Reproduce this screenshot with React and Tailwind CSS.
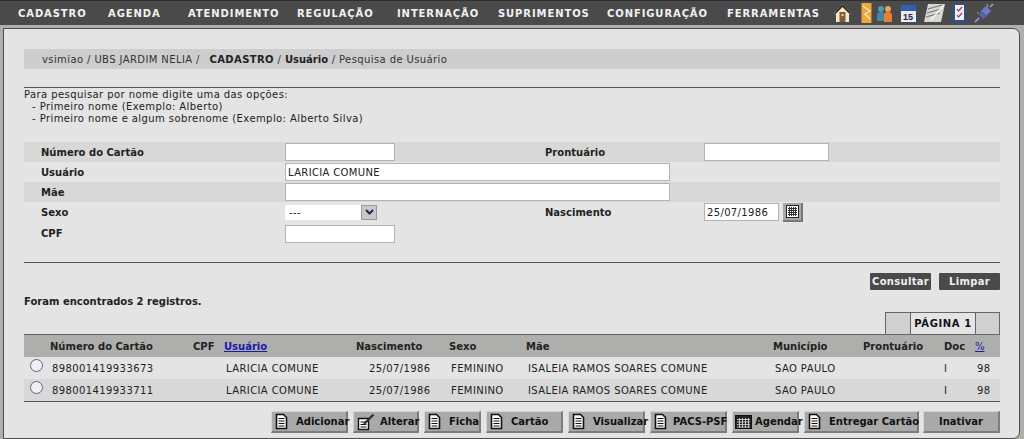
import React from 'react';

const menu = [
  ['CADASTRO', 'w-[90px]'],
  ['AGENDA', 'w-[80px]'],
  ['ATENDIMENTO', 'w-[109px]'],
  ['REGULAÇÃO', 'w-[100px]'],
  ['INTERNAÇÃO', 'w-[101px]'],
  ['SUPRIMENTOS', 'w-[109px]'],
  ['CONFIGURAÇÃO', 'w-[120px]'],
  ['FERRAMENTAS', 'w-[100px]'],
];

const tableCols = 'grid grid-cols-[26px_143px_31px_132px_93px_77px_247px_90px_81px_31px_1fr] items-center';

const DocIcon = () => (
  <svg width="13" height="17" viewBox="0 0 13 17" className="shrink-0">
    <path d="M1.5 1.5h7l3 3v11h-10z" fill="#fff" stroke="#111" strokeWidth="1.6" />
    <path d="M3.5 5.5h6M3.5 8h6M3.5 10.5h6M3.5 13h6" stroke="#111" strokeWidth="1" />
  </svg>
);

const EditIcon = () => (
  <svg width="19" height="18" viewBox="0 0 19 18" className="shrink-0">
    <path d="M1.5 5.5h10v11h-10z" fill="#fff" stroke="#111" strokeWidth="1.4" />
    <path d="M3.5 9h6M3.5 11.5h6M3.5 14h6" stroke="#111" strokeWidth="1" />
    <path d="M7 11L16.5 1.5" stroke="#333" strokeWidth="2.4" />
  </svg>
);

const GridIcon = () => (
  <svg width="17" height="14" viewBox="0 0 17 14" className="shrink-0">
    <rect x="0.5" y="0.5" width="16" height="13" fill="#222" stroke="#111" />
    <path d="M2 4.5h13M2 7h13M2 9.5h13M2 12h13" stroke="#ddd" strokeWidth="0.8" />
    <path d="M4.5 3v10M7.5 3v10M10.5 3v10M13.5 3v10" stroke="#ddd" strokeWidth="0.8" />
  </svg>
);

const actions = [
  { label: 'Adicionar', w: 'w-[77px]', icon: <DocIcon />, gap: 'gap-[8px]', pl: 'pl-[3px]' },
  { label: 'Alterar', w: 'w-[66px]', icon: <EditIcon />, gap: 'gap-[4px]', pl: 'pl-[3px]' },
  { label: 'Ficha', w: 'w-[57px]', icon: <DocIcon />, gap: 'gap-[8px]', pl: 'pl-[3px]' },
  { label: 'Cartão', w: 'w-[77px]', icon: <DocIcon />, gap: 'gap-[8px]', pl: 'pl-[3px]' },
  { label: 'Visualizar', w: 'w-[77px]', icon: <DocIcon />, gap: 'gap-[8px]', pl: 'pl-[3px]' },
  { label: 'PACS-PSF', w: 'w-[77px]', icon: <DocIcon />, gap: 'gap-[6px]', pl: 'pl-[3px]' },
  { label: 'Agendar', w: 'w-[67px]', icon: <GridIcon />, gap: 'gap-[3px]', pl: 'pl-[2px]' },
  { label: 'Entregar Cartão', w: 'w-[115px]', icon: <DocIcon />, gap: 'gap-[8px]', pl: 'pl-[3px]' },
];

const rows = [
  { cartao: '898001419933673', bg: 'bg-[#e4e4e4]' },
  { cartao: '898001419933711', bg: 'bg-[#d8d8d8]' },
];

const inputBox = 'h-[18px] bg-white border border-[#b4b4b4] px-[2px] text-[10px] text-[#222] tracking-[0.35px] flex items-center';

const ToolbarIcons = () => (
  <div className="flex items-center ml-[6px] gap-[6px]">
    {/* casa */}
    <svg width="19" height="20" viewBox="0 0 19 20">
      <path d="M9.500 1L1 10l2 1.500V19h13v-7.500l2-1.500z" fill="#efe8d2" />
      <path d="M9.500 1L1 10l1.500 1L9.500 4l7 7 1.500-1z" fill="#3b2a1a" />
      <rect x="6.500" y="9" width="6" height="10" fill="#8a5a2c" />
      <rect x="8.500" y="11" width="2" height="2" fill="#e8d8a8" />
    </svg>
    {/* porta */}
    <svg width="15" height="22" viewBox="0 0 15 22">
      <path d="M0 14h4" stroke="#3a4fb0" strokeWidth="1" />
      <rect x="3.500" y="1" width="10" height="20" fill="#f0a63c" />
      <path d="M5 4l7 5-5 3 5 5" stroke="#fff0c8" strokeWidth="1.200" fill="none" />
    </svg>
    {/* pessoas */}
    <svg width="18" height="20" viewBox="0 0 18 20" className="-ml-[3px]">
      <circle cx="5" cy="6" r="3" fill="#4f9bb8" />
      <path d="M1 18v-6q0-3 4-3t4 3v6z" fill="#3f86a8" />
      <circle cx="12" cy="6" r="3" fill="#f2a05a" />
      <path d="M8 19v-7q0-3 4-3t4 3v7z" fill="#ec7f2e" />
    </svg>
    {/* calendario */}
    <svg width="17" height="19" viewBox="0 0 17 19">
      <rect x="1" y="1" width="15" height="17" fill="#e8eef6" />
      <rect x="1" y="1" width="15" height="6" fill="#2f5fb0" />
      <text x="3" y="15.500" fontSize="9" fontWeight="700" fontFamily="Liberation Sans, sans-serif" fill="#15233f">15</text>
    </svg>
    {/* formulario */}
    <svg width="23" height="20" viewBox="0 0 23 20">
      <path d="M5 1h17l-4 18H1z" fill="#d6d6d2" />
      <path d="M5 6l14-4M4 10l14-4M3 14l14-4" stroke="#777" strokeWidth="1.200" />
      <path d="M8 17L20 3" stroke="#f4f4f4" strokeWidth="1.500" />
    </svg>
    {/* checklist */}
    <svg width="14" height="20" viewBox="0 0 14 20">
      <rect x="0.500" y="0.500" width="13" height="19" fill="#2a4f96" />
      <rect x="3" y="2" width="9" height="15" fill="#eef2f8" />
      <path d="M5 6l1.500 2L10 4M5 12l1.500 2L10 10" stroke="#b03050" strokeWidth="1.200" fill="none" />
    </svg>
    {/* conexao */}
    <svg width="21" height="20" viewBox="0 0 21 20" className="ml-[2px]">
      <path d="M12 3l5 5-6 6-5-5z" fill="#6d7ac8" />
      <path d="M8 8l5 5-4 3-4-4z" fill="#5560ad" />
      <path d="M16 4l3-3M5 15l-4 4" stroke="#9aa4dc" strokeWidth="1.500" />
      <path d="M13 1l1 3M3 9l2 2" stroke="#b8a868" strokeWidth="1" />
    </svg>
  </div>
);

const App = () => {
  return (
    <div className="w-[1024px] h-[439px] overflow-hidden bg-[#afafa9] text-[10px] text-[#222] font-['DejaVu_Sans','Liberation_Sans',sans-serif]">
      <div className="h-[25px] bg-[#4a4a4a] border-t border-[#2e2e2e] flex items-center pl-[18px]">
        {menu.map(([label, w]) => (
          <span key={label} className={`${w} text-[10px] font-bold tracking-[0.9px] text-[#f2f2f2] whitespace-nowrap`}>
            {label}
          </span>
        ))}
        <ToolbarIcons />
      </div>

      <div className="ml-[3px] mr-[4px] mt-[3px] h-[411px] bg-[#e4e4e4] border border-[#4e4e4e] rounded-tr-[7px] rounded-br-[7px] pl-[20px] pr-[19px] pt-[20px]">
        <div className="h-[20px] bg-[#cdcdcd] flex items-center pl-[18px] tracking-[0.4px] whitespace-pre text-[#333]">
          <span>vsimiao / UBS JARDIM NELIA / </span>
          <span className="ml-[6px] font-bold text-[#222]">CADASTRO</span>
          <span> / </span>
          <span className="font-bold tracking-[0px] text-[#222]">Usuário</span>
          <span> / Pesquisa de Usuário</span>
        </div>

        <div className="mt-[18px] border-t border-[#555] pt-[1px] leading-[12px] tracking-[0.42px] text-[#222]">
          <p>Para pesquisar por nome digite uma das opções:</p>
          <p className="pl-[8px]">- Primeiro nome (Exemplo: Alberto)</p>
          <p className="pl-[8px]">- Primeiro nome e algum sobrenome (Exemplo: Alberto Silva)</p>
        </div>

        <div className="mt-[17px] font-bold">
          <div className="h-[20px] bg-[#d8d8d8] grid grid-cols-[261px_260px_159px_1fr] items-center">
            <span className="pl-[17px]">Número do Cartão</span>
            <div className={`${inputBox} w-[110px]`} />
            <span>Prontuário</span>
            <div className={`${inputBox} w-[125px]`} />
          </div>
          <div className="h-[20px] grid grid-cols-[261px_1fr] items-center">
            <span className="pl-[17px]">Usuário</span>
            <div className={`${inputBox} w-[385px] font-normal`}>LARICIA COMUNE</div>
          </div>
          <div className="h-[20px] bg-[#d8d8d8] grid grid-cols-[261px_1fr] items-center">
            <span className="pl-[17px]">Mãe</span>
            <div className={`${inputBox} w-[385px]`} />
          </div>
          <div className="h-[20px] grid grid-cols-[261px_260px_159px_1fr] items-center">
            <span className="pl-[17px]">Sexo</span>
            <div className="w-[92px] h-[15px] bg-white flex items-center justify-between font-normal pl-[4px]">
              <span className="tracking-[0.4px]">---</span>
              <span className="w-[16px] h-[15px] bg-[#c8c8c8] border border-[#9a9a9a] flex items-center justify-center">
                <svg width="9" height="6" viewBox="0 0 9 6">
                  <path d="M1 1l3.500 3.500L8 1" stroke="#1c2c50" strokeWidth="2" fill="none" />
                </svg>
              </span>
            </div>
            <span>Nascimento</span>
            <div className="flex items-center gap-[4px]">
              <div className={`${inputBox} w-[75px] font-normal`}>25/07/1986</div>
              <div className="w-[20px] h-[19px] bg-[#a8a8a8] border-r-2 border-b-2 border-[#777] flex items-center justify-center">
                <svg width="13" height="13" viewBox="0 0 13 13">
                  <rect x="0.500" y="0.500" width="12" height="12" fill="#fff" stroke="#222" />
                  <path d="M2 3.500h9M2 5.500h9M2 7.500h9M2 9.500h9" stroke="#333" />
                  <path d="M3.500 2v9M5.500 2v9M7.500 2v9M9.500 2v9" stroke="#333" />
                </svg>
              </div>
            </div>
          </div>
          <div className="h-[23px] grid grid-cols-[261px_1fr] items-center">
            <span className="pl-[17px]">CPF</span>
            <div className={`${inputBox} w-[110px]`} />
          </div>
        </div>

        <div className="mt-[17px] border-t border-[#555]" />

        <div className="mt-[10px] flex justify-end gap-[8px] font-bold tracking-[0.3px] text-[#eee]">
          <button className="w-[61px] h-[17px] bg-[#4a4a4a] rounded-[1px]">Consultar</button>
          <button className="w-[61px] h-[17px] bg-[#4a4a4a] rounded-[1px]">Limpar</button>
        </div>

        <p className="mt-[6px] h-[12px] leading-[12px] font-bold">Foram encontrados 2 registros.</p>

        <div className="mt-[4px] flex justify-end h-[22px] font-bold">
          <div className="w-[25px] bg-[#d0d0d0] border-l border-t border-[#666]" />
          <div className="w-[65px] border-l border-t border-[#666] flex items-center justify-center tracking-[0.6px] text-[#111]">PÁGINA 1</div>
          <div className="w-[25px] bg-[#d0d0d0] border-l border-t border-r border-[#666]" />
        </div>

        <div className={`${tableCols} h-[23px] bg-[#aeaeac] border-t border-[#666] font-bold`}>
          <span />
          <span>Número do Cartão</span>
          <span>CPF</span>
          <span className="text-[#1a1aa8] underline">Usuário</span>
          <span>Nascimento</span>
          <span>Sexo</span>
          <span>Mãe</span>
          <span>Município</span>
          <span>Prontuário</span>
          <span>Doc</span>
          <span className="text-[#1a1aa8] underline font-normal">%</span>
        </div>

        {rows.map((r) => (
          <div key={r.cartao} className={`${tableCols} h-[22px] ${r.bg} tracking-[0.4px]`}>
            <span className="pl-[6px] -mt-[6px]">
              <span className="block w-[13px] h-[13px] rounded-full bg-[#eef0f4] border border-[#5a6a80]" />
            </span>
            <span className="pl-[2px]">{r.cartao}</span>
            <span />
            <span className="pl-[2px]">LARICIA COMUNE</span>
            <span className="pl-[13px]">25/07/1986</span>
            <span className="pl-[2px]">FEMININO</span>
            <span className="pl-[2px]">ISALEIA RAMOS SOARES COMUNE</span>
            <span className="pl-[2px]">SAO PAULO</span>
            <span />
            <span>I</span>
            <span className="pl-[2px]">98</span>
          </div>
        ))}

        <div className="border-t border-[#555]" />

        <div className="mt-[9px] flex justify-end gap-[5px] font-bold text-[#111]">
          {actions.map((a) => (
            <button
              key={a.label}
              className={`${a.w} ${a.gap} ${a.pl} h-[22px] bg-[#a9a9a9] border-t border-l border-[#d4d4d4] border-r-2 border-b-2 border-r-[#7c7c7c] border-b-[#7c7c7c] flex items-center whitespace-nowrap`}
            >
              {a.icon}
              <span>{a.label}</span>
            </button>
          ))}
          <button className="w-[77px] h-[22px] ml-[-1px] bg-[#a9a9a9] border-t border-l border-[#d4d4d4] border-r-2 border-b-2 border-r-[#7c7c7c] border-b-[#7c7c7c] text-[#111]">
            Inativar
          </button>
        </div>
      </div>
    </div>
  );
};

export default App;
